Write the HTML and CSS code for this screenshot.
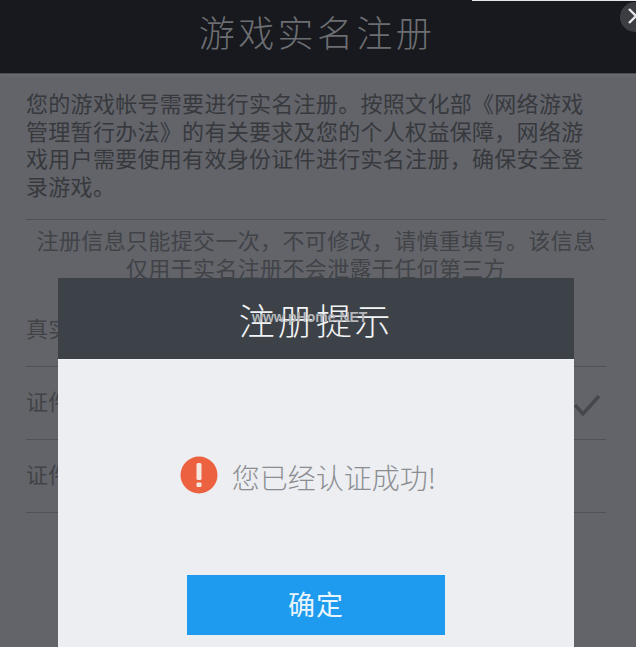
FILE: index.html
```html
<!DOCTYPE html>
<html lang="zh-CN">
<head>
<meta charset="utf-8">
<title>游戏实名注册</title>
<link rel="stylesheet" href="styles.css">
</head>
<body>
<div class="page">
  <div class="top-strip"></div>
  <header class="header">
    <h1 class="title">游戏实名注册</h1>
    <div class="close">
      <svg class="close-icon" width="16" height="16" viewBox="0 0 16 16"><path d="M1 1 L8 8 L1 15" fill="none" stroke="#e8e8ea" stroke-width="2.4"/></svg>
    </div>
  </header>
  <main class="content">
    <p class="intro">您的游戏帐号需要进行实名注册。按照文化部《网络游戏管理暂行办法》的有关要求及您的个人权益保障，网络游戏用户需要使用有效身份证件进行实名注册，确保安全登录游戏。</p>
    <p class="notice">注册信息只能提交一次，不可修改，请慎重填写。该信息<br>仅用于实名注册不会泄露于任何第三方</p>
    <div class="row"><span class="row-label">真实姓名</span></div>
    <div class="row"><span class="row-label">证件类型</span>
      <svg class="check" width="28" height="24" viewBox="0 0 28 24"><path d="M2 12 L10 21 L26 3" fill="none" stroke="#45474c" stroke-width="3.4"/></svg>
    </div>
    <div class="row"><span class="row-label">证件号码</span></div>
  </main>
  <section class="modal">
    <div class="modal-head">
      <span class="modal-title">注册提示</span>
      <span class="watermark">www.pHome.NET</span>
    </div>
    <div class="modal-body">
      <div class="message">
        <svg class="alert" width="38" height="38" viewBox="0 0 38 38"><circle cx="19" cy="19" r="18.5" fill="#ec6240"/><rect x="16.5" y="7" width="5" height="17" rx="1.5" fill="#f6e6e0"/><rect x="16.5" y="26.5" width="5" height="4.5" rx="1" fill="#f6e6e0"/></svg>
        <span class="message-text">您已经认证成功!</span>
      </div>
      <button class="confirm" type="button">确定</button>
    </div>
  </section>
</div>
</body>
</html>
```

FILE: styles.css
```css
* { box-sizing: border-box; }
html, body { margin: 0; padding: 0; }
body {
  width: 636px;
  height: 647px;
  overflow: hidden;
  font-family: "Noto Sans CJK SC", "Noto Sans", sans-serif;
  background: #62646a;
}
.page { position: relative; width: 636px; height: 647px; overflow: hidden; }
.top-strip {
  position: absolute;
  top: 0;
  right: 0;
  width: 164px;
  height: 1px;
  background: #e6e6e8;
}
.header {
  height: 74px;
  background: #17191e;
  border-bottom: 1px solid #4a4c51;
  box-shadow: 0 2px 3px rgba(255, 255, 255, 0.05);
  display: flex;
  align-items: center;
  justify-content: center;
}
.title {
  margin: 0 2px 11px 0;
  font-size: 36px;
  font-weight: 300;
  letter-spacing: 3.4px;
  line-height: 44px;
  color: #6d6e72;
}
.close {
  position: absolute;
  top: 2px;
  left: 620px;
  width: 30px;
  height: 30px;
  border-radius: 50%;
  background: #3b3d42;
}
.close-icon { position: absolute; left: 8px; top: 6px; }
.content { padding: 15px 30px 0 26px; }
.intro {
  margin: 0;
  padding: 0 20px 18px 0;
  height: 131px;
  font-size: 22px;
  line-height: 27.6px;
  letter-spacing: 0.3px;
  color: #37393d;
  border-bottom: 1px solid #505257;
  word-break: break-all;
}
.notice {
  margin: 0;
  padding-top: 5px;
  height: 74px;
  font-size: 22px;
  line-height: 28px;
  letter-spacing: 0.35px;
  text-align: center;
  color: #414347;
}
.row {
  position: relative;
  height: 73px;
  border-bottom: 1px solid #505257;
  display: flex;
  align-items: center;
}
.row-label {
  font-size: 22px;
  line-height: 28px;
  letter-spacing: 0.3px;
  color: #414347;
  margin-bottom: 6px;
}
.check { position: absolute; left: 547px; top: 26px; }
.modal {
  position: absolute;
  left: 58px;
  top: 278px;
  width: 516px;
  height: 380px;
  background: #eceef1;
}
.modal-head {
  position: relative;
  height: 82px;
  background: #3d4249;
  border-bottom: 1px solid #f2f3f5;
  display: flex;
  align-items: center;
  justify-content: center;
}
.modal-title {
  font-size: 36px;
  font-weight: 300;
  letter-spacing: 2.6px;
  line-height: 44px;
  color: #f3f4f5;
}
.watermark {
  position: absolute;
  left: 194px;
  top: 30px;
  font-family: "Liberation Sans", sans-serif;
  font-size: 14px;
  font-weight: 700;
  line-height: 18px;
  color: #b4b6b9;
}
.modal-body {
  display: flex;
  flex-direction: column;
  align-items: center;
  padding-top: 96px;
}
.message {
  display: flex;
  align-items: center;
  gap: 14px;
  height: 40px;
  margin-left: -16px;
}
.alert { margin-top: -2px; }
.message-text {
  font-size: 28px;
  font-weight: 300;
  line-height: 40px;
  color: #8b8d92;
  margin-top: 2px;
}
.confirm {
  margin-top: 79px;
  width: 258px;
  height: 60px;
  border: 0;
  padding: 0 0 4px;
  background: #1e9bee;
  color: #e9f5fd;
  font-family: inherit;
  font-size: 27px;
  letter-spacing: 1px;
}
```
